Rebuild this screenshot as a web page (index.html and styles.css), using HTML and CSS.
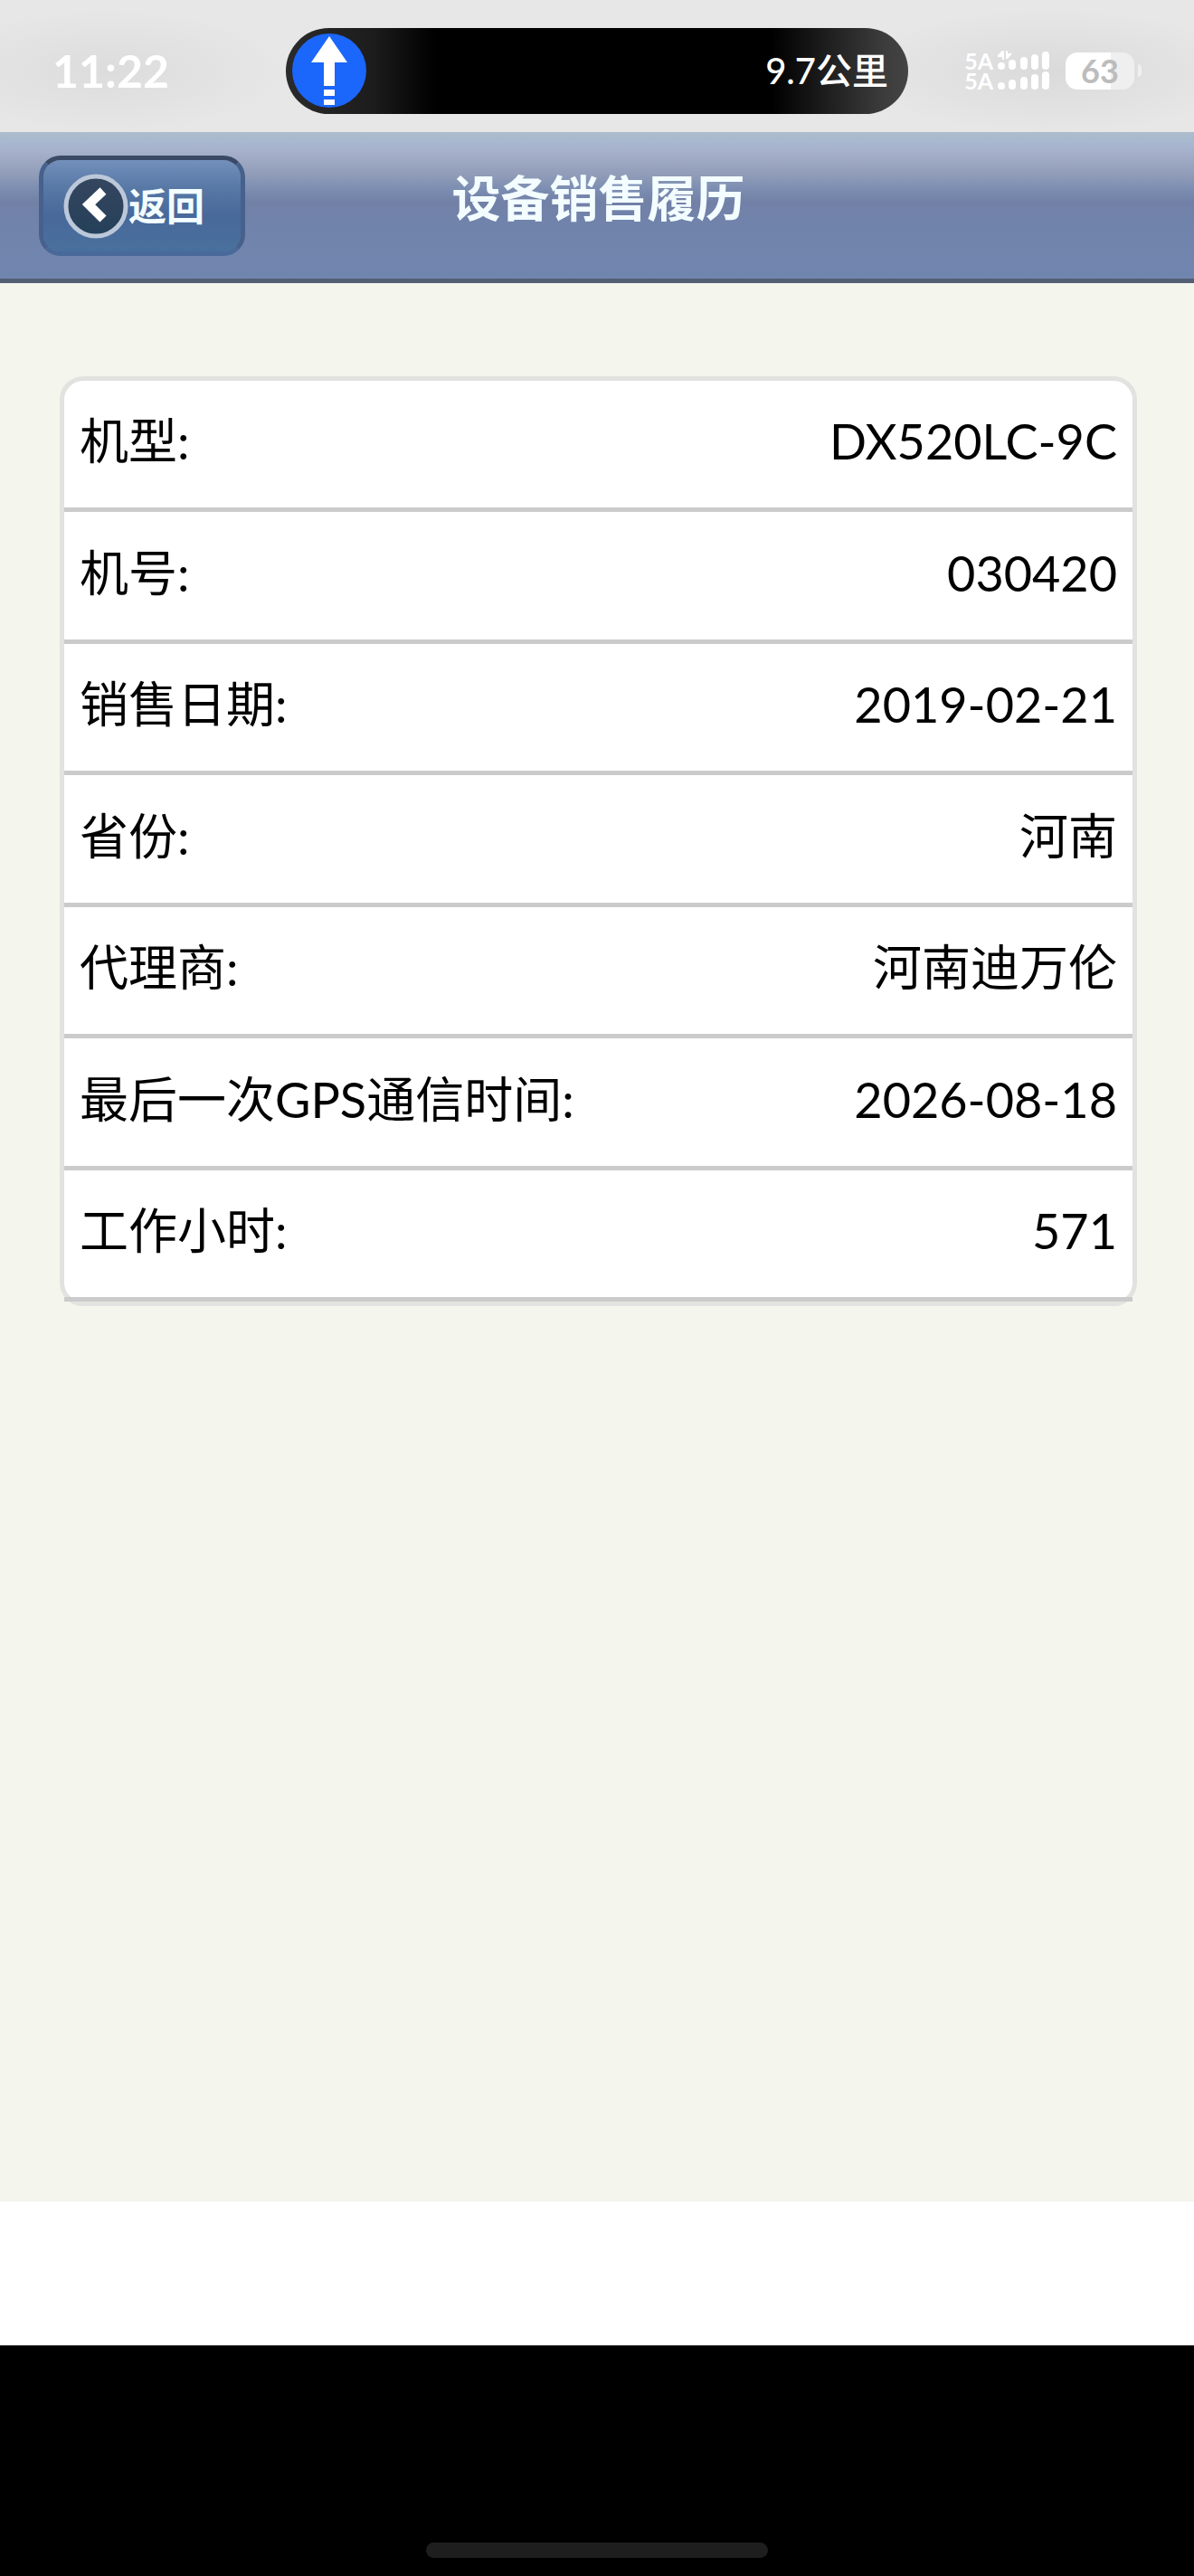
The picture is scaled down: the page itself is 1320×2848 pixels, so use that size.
FILE: index.html
```html
<!DOCTYPE html>
<html lang="zh-CN">
<head>
<meta charset="utf-8">
<meta name="viewport" content="width=device-width, initial-scale=1">
<title>设备销售履历</title>
<link rel="stylesheet" href="styles.css">
</head>
<body>
<div class="status-bar">
  <div class="status-left"><time class="clock">11:22</time></div>
  <div class="island">
    <svg class="nav-icon" viewBox="0 0 82 82" aria-hidden="true">
      <circle cx="41" cy="41" r="41" fill="#1b66fb"/>
      <path fill="#fff" d="M41 3 61 32H47V58H35V32H21ZM35 62H47V69H35ZM35 73H47V79H35Z"/>
    </svg>
    <span class="distance">9.7公里</span>
  </div>
  <div class="status-right">
    <div class="networks">
      <div class="carriers">5A<br>5A</div>
      <svg class="signal" viewBox="0 0 60 44" aria-hidden="true">
        <g fill="#fff">
          <circle cx="5" cy="17" r="4"/>
          <rect x="13" y="10" width="8" height="11" rx="4"/>
          <rect x="26" y="7" width="8" height="14" rx="4"/>
          <rect x="38" y="4" width="8" height="17" rx="4"/>
          <rect x="50" y="1" width="8" height="20" rx="4"/>
          <path d="M6 0H8V10H6V7H1V5ZM10 0H12V3H17L12 9H10Z"/>
          <circle cx="5" cy="39" r="4"/>
          <rect x="13" y="32" width="8" height="11" rx="4"/>
          <rect x="26" y="29" width="8" height="14" rx="4"/>
          <rect x="38" y="26" width="8" height="17" rx="4"/>
          <rect x="50" y="23" width="8" height="20" rx="4"/>
        </g>
      </svg>
    </div>
    <div class="battery"><span class="battery-body">63</span><span class="battery-tip"></span></div>
  </div>
</div>

<header class="title-bar">
  <button class="back" type="button">
    <svg class="back-icon" viewBox="0 0 72 72" aria-hidden="true">
      <defs>
        <linearGradient id="disc" x1="0" y1="0" x2="0" y2="1">
          <stop offset="0" stop-color="#36465f"/>
          <stop offset="1" stop-color="#24405a"/>
        </linearGradient>
      </defs>
      <circle cx="36" cy="36" r="33" fill="url(#disc)" stroke="#bcc8da" stroke-width="5"/>
      <path d="M44 19 28 34 44 50" fill="none" stroke="#fff" stroke-width="10"/>
    </svg>
    <span>返回</span>
  </button>
  <h1 class="title">设备销售履历</h1>
</header>

<main class="content">
  <div class="card">
    <table class="details">
      <tbody>
        <tr><th scope="row">机型:</th><td>DX520LC-9C</td></tr>
        <tr><th scope="row">机号:</th><td>030420</td></tr>
        <tr><th scope="row">销售日期:</th><td>2019-02-21</td></tr>
        <tr><th scope="row">省份:</th><td>河南</td></tr>
        <tr><th scope="row">代理商:</th><td>河南迪万伦</td></tr>
        <tr><th scope="row">最后一次GPS通信时间:</th><td>2026-08-18</td></tr>
        <tr><th scope="row">工作小时:</th><td>571</td></tr>
      </tbody>
    </table>
  </div>
</main>

<div class="toolbar-space"></div>
<footer class="gesture-area"><div class="home-indicator"></div></footer>
</body>
</html>
```

FILE: styles.css
```css
* {
  box-sizing: border-box;
}

body {
  margin: 0;
  min-height: 100vh;
  display: flex;
  flex-direction: column;
  background: #fff;
  color: #000;
  font-family: Lato, "Noto Sans CJK SC", sans-serif;
}

svg {
  display: block;
}

/* Status bar */
.status-bar {
  display: grid;
  grid-template-columns: 1fr 688px 1fr;
  align-items: center;
  height: 146px;
  padding: 10px 58px 0;
  background:
    radial-gradient(ellipse 200px 70px at 9% 54%, #dcdcdc, transparent),
    radial-gradient(ellipse 220px 70px at 88% 54%, #dadada, transparent),
    #e7e7e7;
  color: #fff;
}

.clock {
  font-size: 50px;
  line-height: 60px;
  font-weight: 700;
}

.island {
  display: flex;
  align-items: center;
  justify-content: space-between;
  height: 95px;
  padding: 0 22px 0 7px;
  border-radius: 48px;
  background: linear-gradient(90deg, #2b2b2b, #1c1c1c 14%, #000 24%, #000 78%, #3c3c3c 96%, #444);
}

.nav-icon {
  width: 82px;
  height: 82px;
}

.distance {
  font-size: 40px;
  line-height: 60px;
  font-weight: 500;
}

.status-right {
  display: flex;
  align-items: center;
  justify-content: flex-end;
  gap: 16px;
}

.networks {
  display: flex;
  align-items: center;
  gap: 4px;
}

.carriers {
  font-size: 25px;
  line-height: 22px;
  font-weight: 700;
}

.signal {
  width: 60px;
  height: 44px;
}

.battery {
  display: flex;
  align-items: center;
  gap: 4px;
}

.battery-body {
  width: 76px;
  border-radius: 13px;
  background: linear-gradient(90deg, #fff 66%, #efefef 66%);
  color: #bcbcbc;
  font-size: 36px;
  line-height: 41px;
  font-weight: 700;
  text-align: center;
}

.battery-tip {
  width: 4px;
  height: 14px;
  border-radius: 0 4px 4px 0;
  background: #efefef;
}

/* Title bar */
.title-bar {
  display: grid;
  grid-template-columns: 1fr auto 1fr;
  align-items: start;
  height: 167px;
  padding: 26px 40px 0 43px;
  border-bottom: 5px solid #535f74;
  background: linear-gradient(#aebccb, #a8b9d0 6%, #a5afc9 14%, #8f9bb7 30%, #7d8fb3 38%, #7280a6 48%, #7183ab 60%, #7186af);
  color: #f3fdff;
}

.back {
  justify-self: start;
  display: flex;
  align-items: center;
  width: 228px;
  height: 111px;
  padding: 0 0 0 22px;
  border: 5px solid;
  border-color: #3a4a66 #46618c #48699a;
  border-radius: 24px;
  background: linear-gradient(#7390bb, #5878a6 30%, #48699a 60%, #49709d);
  background-clip: padding-box;
  color: inherit;
  font: 700 42px/60px Lato, "Noto Sans CJK SC", sans-serif;
}

.back-icon {
  width: 72px;
  height: 72px;
}

.title {
  margin: 12px 0 0;
  font-size: 54px;
  line-height: 72px;
  font-weight: 700;
}

/* Details */
.content {
  flex: 1;
  padding: 103px 63px 64px 66px;
  background: #f4f5ec;
}

.card {
  border: 5px solid #e2e3e0;
  border-radius: 26px;
  background: #fff;
}

.details {
  width: 100%;
  border-spacing: 0;
  font-size: 54px;
  line-height: 72px;
}

.details th,
.details td {
  height: 145px;
  padding: 0 17px 6px;
  border-bottom: 5px solid #cbcbcb;
  font-weight: 400;
}

.details tr:nth-child(even) > * {
  height: 146px;
}

.details th {
  text-align: left;
}

.details td {
  text-align: right;
}

/* Bottom of the screen */
.toolbar-space {
  height: 159px;
}

.gesture-area {
  display: flex;
  align-items: flex-end;
  justify-content: center;
  height: 255px;
  padding-bottom: 20px;
  background: #000;
}

.home-indicator {
  width: 378px;
  height: 17px;
  border-radius: 9px;
  background: #1e1e1e;
}
```
